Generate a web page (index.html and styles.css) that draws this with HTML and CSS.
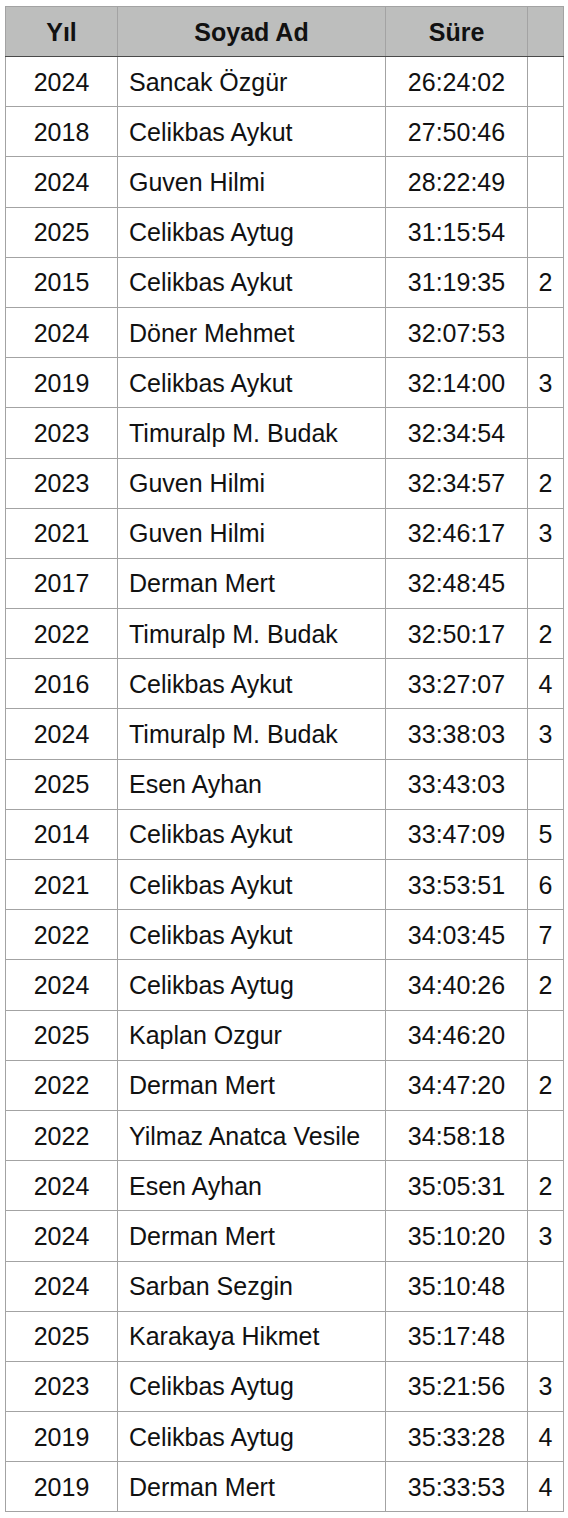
FILE: index.html
```html
<!DOCTYPE html>
<html lang="tr">
<head>
<meta charset="utf-8">
<title>Sonuçlar</title>
<link rel="stylesheet" href="styles.css">
</head>
<body>
<table class="results">
<thead>
<tr><th class="c-year">Yıl</th><th class="c-name">Soyad Ad</th><th class="c-time">Süre</th><th class="c-rank"></th></tr>
</thead>
<tbody>
<tr><td class="c-year">2024</td><td class="c-name">Sancak Özgür</td><td class="c-time">26:24:02</td><td class="c-rank"></td></tr>
<tr><td class="c-year">2018</td><td class="c-name">Celikbas Aykut</td><td class="c-time">27:50:46</td><td class="c-rank"></td></tr>
<tr><td class="c-year">2024</td><td class="c-name">Guven Hilmi</td><td class="c-time">28:22:49</td><td class="c-rank"></td></tr>
<tr><td class="c-year">2025</td><td class="c-name">Celikbas Aytug</td><td class="c-time">31:15:54</td><td class="c-rank"></td></tr>
<tr><td class="c-year">2015</td><td class="c-name">Celikbas Aykut</td><td class="c-time">31:19:35</td><td class="c-rank">2</td></tr>
<tr><td class="c-year">2024</td><td class="c-name">Döner Mehmet</td><td class="c-time">32:07:53</td><td class="c-rank"></td></tr>
<tr><td class="c-year">2019</td><td class="c-name">Celikbas Aykut</td><td class="c-time">32:14:00</td><td class="c-rank">3</td></tr>
<tr><td class="c-year">2023</td><td class="c-name">Timuralp M. Budak</td><td class="c-time">32:34:54</td><td class="c-rank"></td></tr>
<tr><td class="c-year">2023</td><td class="c-name">Guven Hilmi</td><td class="c-time">32:34:57</td><td class="c-rank">2</td></tr>
<tr><td class="c-year">2021</td><td class="c-name">Guven Hilmi</td><td class="c-time">32:46:17</td><td class="c-rank">3</td></tr>
<tr><td class="c-year">2017</td><td class="c-name">Derman Mert</td><td class="c-time">32:48:45</td><td class="c-rank"></td></tr>
<tr><td class="c-year">2022</td><td class="c-name">Timuralp M. Budak</td><td class="c-time">32:50:17</td><td class="c-rank">2</td></tr>
<tr><td class="c-year">2016</td><td class="c-name">Celikbas Aykut</td><td class="c-time">33:27:07</td><td class="c-rank">4</td></tr>
<tr><td class="c-year">2024</td><td class="c-name">Timuralp M. Budak</td><td class="c-time">33:38:03</td><td class="c-rank">3</td></tr>
<tr><td class="c-year">2025</td><td class="c-name">Esen Ayhan</td><td class="c-time">33:43:03</td><td class="c-rank"></td></tr>
<tr><td class="c-year">2014</td><td class="c-name">Celikbas Aykut</td><td class="c-time">33:47:09</td><td class="c-rank">5</td></tr>
<tr><td class="c-year">2021</td><td class="c-name">Celikbas Aykut</td><td class="c-time">33:53:51</td><td class="c-rank">6</td></tr>
<tr><td class="c-year">2022</td><td class="c-name">Celikbas Aykut</td><td class="c-time">34:03:45</td><td class="c-rank">7</td></tr>
<tr><td class="c-year">2024</td><td class="c-name">Celikbas Aytug</td><td class="c-time">34:40:26</td><td class="c-rank">2</td></tr>
<tr><td class="c-year">2025</td><td class="c-name">Kaplan Ozgur</td><td class="c-time">34:46:20</td><td class="c-rank"></td></tr>
<tr><td class="c-year">2022</td><td class="c-name">Derman Mert</td><td class="c-time">34:47:20</td><td class="c-rank">2</td></tr>
<tr><td class="c-year">2022</td><td class="c-name">Yilmaz Anatca Vesile</td><td class="c-time">34:58:18</td><td class="c-rank"></td></tr>
<tr><td class="c-year">2024</td><td class="c-name">Esen Ayhan</td><td class="c-time">35:05:31</td><td class="c-rank">2</td></tr>
<tr><td class="c-year">2024</td><td class="c-name">Derman Mert</td><td class="c-time">35:10:20</td><td class="c-rank">3</td></tr>
<tr><td class="c-year">2024</td><td class="c-name">Sarban Sezgin</td><td class="c-time">35:10:48</td><td class="c-rank"></td></tr>
<tr><td class="c-year">2025</td><td class="c-name">Karakaya Hikmet</td><td class="c-time">35:17:48</td><td class="c-rank"></td></tr>
<tr><td class="c-year">2023</td><td class="c-name">Celikbas Aytug</td><td class="c-time">35:21:56</td><td class="c-rank">3</td></tr>
<tr><td class="c-year">2019</td><td class="c-name">Celikbas Aytug</td><td class="c-time">35:33:28</td><td class="c-rank">4</td></tr>
<tr><td class="c-year">2019</td><td class="c-name">Derman Mert</td><td class="c-time">35:33:53</td><td class="c-rank">4</td></tr>
</tbody>
</table>
</body>
</html>
```
FILE: styles.css
```css
html, body {
  margin: 0;
  padding: 0;
  background: #ffffff;
}
body {
  padding: 6px 5px 0 5px;
  font-family: "Liberation Sans", Arial, Helvetica, sans-serif;
  color: #111111;
}
.results {
  border-collapse: collapse;
  table-layout: fixed;
  width: 558px;
  font-size: 25px;
}
.results th,
.results td {
  border: 1px solid #a3a3a3;
  height: 50.2px;
  padding: 0;
  box-sizing: border-box;
  vertical-align: middle;
  line-height: 28px;
}
.results th {
  background: #bdbebd;
  font-weight: bold;
  font-size: 25px;
  height: 50px;
  border-bottom: 1px solid #4a4a4a;
}
.c-year { width: 112px; text-align: center; }
.c-name { width: 268px; text-align: left; padding-left: 11px !important; }
.results th.c-name { text-align: center; padding-left: 0 !important; }
.c-time { width: 142px; text-align: center; }
.c-rank { width: 36px; text-align: center; }
```
